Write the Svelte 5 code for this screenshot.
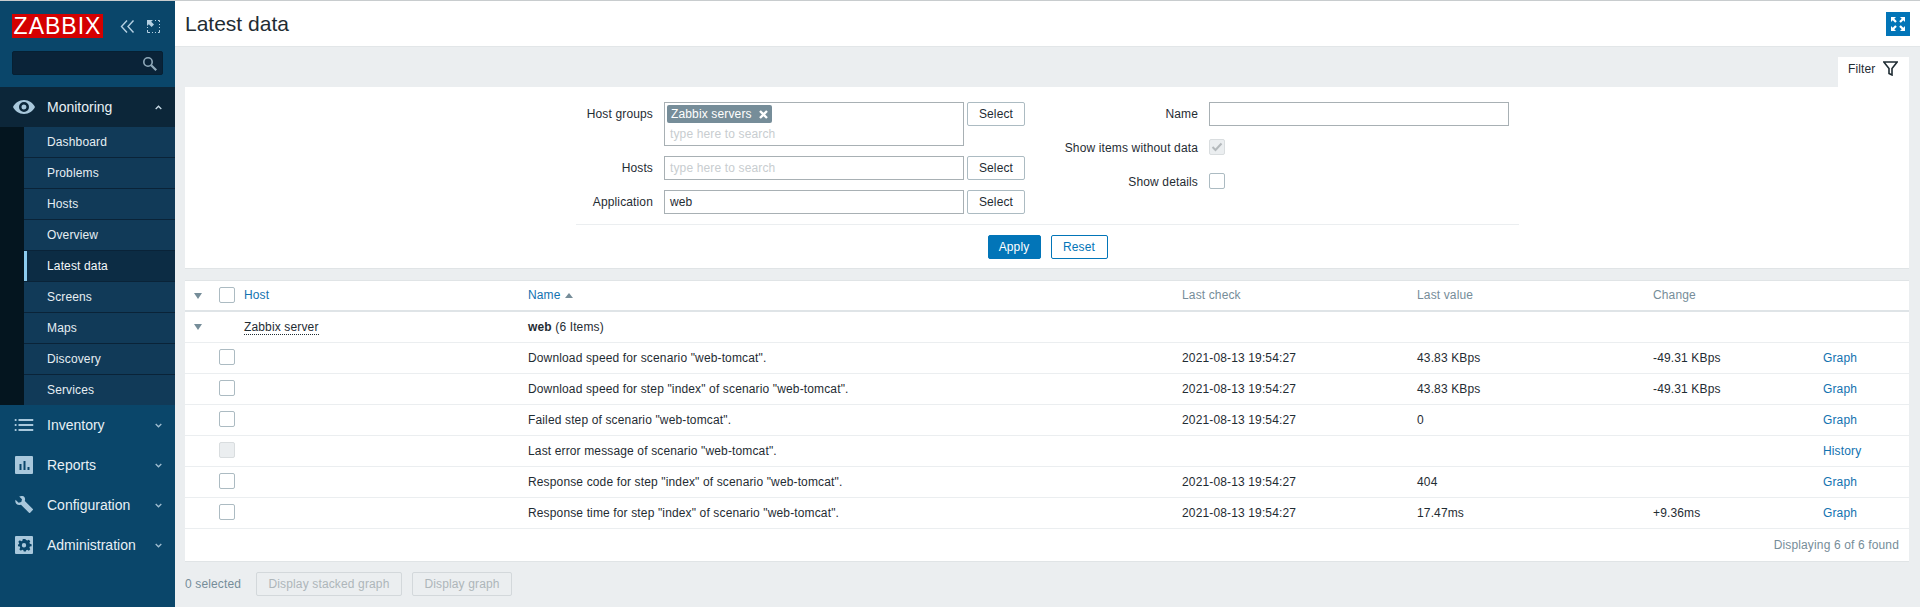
<script>
  const submenu = ['Dashboard', 'Problems', 'Hosts', 'Overview', 'Latest data', 'Screens', 'Maps', 'Discovery', 'Services'];
  const rows = [
    { name: 'Download speed for scenario "web-tomcat".', check: '2021-08-13 19:54:27', value: '43.83 KBps', change: '-49.31 KBps', action: 'Graph' },
    { name: 'Download speed for step "index" of scenario "web-tomcat".', check: '2021-08-13 19:54:27', value: '43.83 KBps', change: '-49.31 KBps', action: 'Graph' },
    { name: 'Failed step of scenario "web-tomcat".', check: '2021-08-13 19:54:27', value: '0', change: '', action: 'Graph' },
    { name: 'Last error message of scenario "web-tomcat".', check: '', value: '', change: '', action: 'History', disabled: true },
    { name: 'Response code for step "index" of scenario "web-tomcat".', check: '2021-08-13 19:54:27', value: '404', change: '', action: 'Graph' },
    { name: 'Response time for step "index" of scenario "web-tomcat".', check: '2021-08-13 19:54:27', value: '17.47ms', change: '+9.36ms', action: 'Graph' }
  ];
</script>

<div class="page">
  <aside class="sidebar">
    <div class="brand">
      <div class="logo">ZABBIX</div>
      <svg class="collapse" width="15" height="13" viewBox="0 0 15 13" fill="none" stroke="#b5d0e2" stroke-width="1.4"><path d="M7 .5 1.5 6.500l5.500 6M13.500 .5 8 6.500l5.500 6" /></svg>
      <svg class="kiosk" width="13" height="13" viewBox="0 0 13 13" fill="none"><path d="M8 .5h1M11 .5h1.5V2M12.5 4v1M12.5 7v1M12.500 10v2.500H11M9 12.500H8M6 12.500H5M3 12.500H.5V10M.5 8V7" stroke="#b5d0e2" /><path d="M0 0h6L4.200 1.800 7 4.600 4.600 7 1.800 4.200 0 6z" fill="#b5d0e2" /></svg>
    </div>
    <div class="search">
      <svg width="15" height="15" viewBox="0 0 15 15" fill="none" stroke="#8fa9ba" stroke-width="1.600"><circle cx="6" cy="6" r="4.200" /><path d="m9.200 9.200 5 5" stroke-width="2.200" /></svg>
    </div>

    <nav>
      <div class="section open">
        <div class="nav-head">
          <svg class="nav-icon" width="22" height="14" viewBox="0 0 22 14"><path d="M11 0C6 0 2 3 0 7c2 4 6 7 11 7s9-3 11-7c-2-4-6-7-11-7zm0 12a5 5 0 1 1 0-10 5 5 0 0 1 0 10zm0-7.500a2.500 2.500 0 1 0 0 5 2.500 2.500 0 0 0 0-5z" fill="#a9c8dc" /></svg>
          <span>Monitoring</span>
          <svg class="chev" width="7" height="5" viewBox="0 0 7 5" fill="none" stroke="#c9dbe6" stroke-width="1.300"><path d="M.7 4 3.500 1.200 6.300 4" /></svg>
        </div>
        <ul class="submenu">
          {#each submenu as item}
            <li class:active={item === 'Latest data'}>{item}</li>
          {/each}
        </ul>
      </div>

      <div class="nav-head">
        <svg class="nav-icon" width="19" height="12" viewBox="0 0 19 12" fill="#a9c8dc"><path d="M0 0h2v2H0zM4 0h15v2H4zM0 5h2v2H0zM4 5h15v2H4zM0 10h2v2H0zM4 10h15v2H4z" /></svg>
        <span>Inventory</span>
        <svg class="chev" width="7" height="5" viewBox="0 0 7 5" fill="none" stroke="#9fbdd0" stroke-width="1.300"><path d="M.7 1 3.500 3.800 6.300 1" /></svg>
      </div>
      <div class="nav-head">
        <svg class="nav-icon" width="18" height="18" viewBox="0 0 18 18"><path d="M1 0h16a1 1 0 0 1 1 1v16a1 1 0 0 1-1 1H1a1 1 0 0 1-1-1V1a1 1 0 0 1 1-1zm3.500 8v6h2V8zm4-3v9h2V5zm4 6v3h2v-3z" fill="#a9c8dc" fill-rule="evenodd" /></svg>
        <span>Reports</span>
        <svg class="chev" width="7" height="5" viewBox="0 0 7 5" fill="none" stroke="#9fbdd0" stroke-width="1.300"><path d="M.7 1 3.500 3.800 6.300 1" /></svg>
      </div>
      <div class="nav-head">
        <svg class="nav-icon" width="18" height="18" viewBox="0 0 18 18"><path d="M6.500 0C8.800-.3 10.500 1.700 10 4l-.2.900 8 8c.3.300.3.800 0 1.100l-2.600 2.800c-.4.300-.9.300-1.200 0l-8-8.100-1 .3C2.600 9.500.2 7.500.3 5L.5 3.700 3.600 6.700 6.300 6 7 3.300 4.200.4z" fill="#a9c8dc" /></svg>
        <span>Configuration</span>
        <svg class="chev" width="7" height="5" viewBox="0 0 7 5" fill="none" stroke="#9fbdd0" stroke-width="1.300"><path d="M.7 1 3.500 3.800 6.300 1" /></svg>
      </div>
      <div class="nav-head">
        <svg class="nav-icon" width="18" height="18" viewBox="0 0 18 18"><path d="M1 0h16a1 1 0 0 1 1 1v16a1 1 0 0 1-1 1H1a1 1 0 0 1-1-1V1a1 1 0 0 1 1-1zm6.800 3-.4 1.700-1.100.5-1.500-.9-1.500 1.500.9 1.500-.5 1.100L3 8.200v2l1.700.4.500 1.100-.9 1.500 1.500 1.500 1.500-.9 1.100.5.400 1.100h2l.4-1.100 1.100-.5 1.500.9 1.500-1.500-.9-1.500.5-1.100 1.700-.4v-2l-1.700-.4-.5-1.100.9-1.500-1.500-1.500-1.500.9-1.100-.5L10.200 3zM9 7a2.200 2.200 0 1 1 0 4.400A2.200 2.200 0 0 1 9 7z" fill="#a9c8dc" fill-rule="evenodd" /></svg>
        <span>Administration</span>
        <svg class="chev" width="7" height="5" viewBox="0 0 7 5" fill="none" stroke="#9fbdd0" stroke-width="1.300"><path d="M.7 1 3.500 3.800 6.300 1" /></svg>
      </div>
    </nav>
  </aside>

  <main class="content">
    <header class="top">
      <h1>Latest data</h1>
      <button class="fullscreen" aria-label="Fullscreen">
        <svg width="16" height="16" viewBox="0 0 16 16" fill="#fff"><path d="M1 1h5L4.300 2.700 6.800 5.200 5.200 6.800 2.700 4.300 1 6zM15 1v5l-1.700-1.700-2.500 2.500-1.600-1.600 2.500-2.500L10 1zM1 15v-5l1.700 1.700 2.500-2.500 1.600 1.600-2.500 2.500L6 15zM15 15h-5l1.700-1.700-2.500-2.500 1.600-1.600 2.500 2.500L15 10z" /></svg>
      </button>
    </header>

    <div class="body">
      <div class="tabs">
        <div class="tab">
          <span>Filter</span>
          <svg width="15" height="15" viewBox="0 0 15 15" fill="none" stroke="#1f2c33" stroke-width="1.600"><path d="M.8 1h13.400L9 7.500V14l-3-1.500v-5z" /></svg>
        </div>
      </div>

      <section class="filter">
        <div class="filter-cols">
          <div class="form left">
            <label class="lbl">Host groups</label>
            <div class="multi">
              <span class="chip">Zabbix servers
                <svg width="9" height="9" viewBox="0 0 9 9" stroke="#fff" stroke-width="2.400"><path d="M1 1l7 7M8 1 1 8" /></svg>
              </span>
              <span class="ph">type here to search</span>
            </div>
            <button class="select">Select</button>

            <label class="lbl">Hosts</label>
            <div class="input"><span class="ph">type here to search</span></div>
            <button class="select">Select</button>

            <label class="lbl">Application</label>
            <div class="input">web</div>
            <button class="select">Select</button>
          </div>

          <div class="form right">
            <label class="lbl">Name</label>
            <div class="input"></div>

            <label class="lbl">Show items without data</label>
            <div class="check-cell">
              <span class="check disabled">
                <svg width="12" height="10" viewBox="0 0 12 10" fill="none" stroke="#b4b9bc" stroke-width="2"><path d="M1.500 5 4.500 8l6-6.500" /></svg>
              </span>
            </div>

            <label class="lbl">Show details</label>
            <div class="check-cell"><span class="check"></span></div>
          </div>
        </div>
        <div class="actions">
          <button class="apply">Apply</button>
          <button class="reset">Reset</button>
        </div>
      </section>

      <section class="list">
        <table>
          <colgroup>
            <col style="width:30px" /><col style="width:24px" /><col style="width:284px" /><col style="width:654px" /><col style="width:235px" /><col style="width:236px" /><col style="width:170px" /><col />
          </colgroup>
          <thead>
            <tr>
              <th class="arrow-cell"><span class="arrow"></span></th>
              <th class="box-cell"><span class="check"></span></th>
              <th><span class="link">Host</span></th>
              <th><span class="link">Name</span><span class="sort"></span></th>
              <th>Last check</th>
              <th>Last value</th>
              <th>Change</th>
              <th></th>
            </tr>
          </thead>
          <tbody>
            <tr>
              <td class="arrow-cell"><span class="arrow"></span></td>
              <td></td>
              <td><span class="host">Zabbix server</span></td>
              <td colspan="5"><b>web</b> <span class="count">(6 Items)</span></td>
            </tr>
            {#each rows as row}
              <tr>
                <td></td>
                <td class="box-cell"><span class="check" class:disabled={row.disabled}></span></td>
                <td></td>
                <td>{row.name}</td>
                <td>{row.check}</td>
                <td>{row.value}</td>
                <td>{row.change}</td>
                <td><span class="link">{row.action}</span></td>
              </tr>
            {/each}
          </tbody>
        </table>
        <div class="paging">Displaying 6 of 6 found</div>
      </section>

      <div class="bulk">
        <span class="selected">0 selected</span>
        <button class="stacked" disabled>Display stacked graph</button>
        <button class="single" disabled>Display graph</button>
      </div>
    </div>
  </main>
</div>

<style>
  :global(body) {
    margin: 0;
    background: #ebeef0;
  }
  .page {
    display: flex;
    height: 607px;
    overflow: hidden;
    font-family: "Liberation Sans", Arial, sans-serif;
    font-size: 12px;
    letter-spacing: .14px;
    color: #1f2c33;
  }
  .sidebar {
    width: 175px;
    flex: none;
    background: #0a466a;
    border-top: 1px solid #c8ccce;
    box-sizing: border-box;
    color: #f2f6f8;
  }
  .brand {
    display: flex;
    align-items: center;
    height: 38px;
    padding: 12px 0 0 12px;
    box-sizing: border-box;
  }
  .logo {
    width: 91px;
    height: 24px;
    background: #d40000;
    color: #fff;
    font-size: 23px;
    line-height: 24px;
    text-align: center;
    letter-spacing: 1px;
  }
  .collapse { margin-left: 17px; }
  .kiosk { margin-left: 12px; }
  .search {
    display: flex;
    align-items: center;
    justify-content: flex-end;
    width: 151px;
    height: 24px;
    margin: 12px 0 12px 12px;
    padding-right: 5px;
    box-sizing: border-box;
    background: #0a2338;
    border: 1px solid #062033;
    border-radius: 2px;
  }
  .nav-head {
    position: relative;
    display: flex;
    align-items: center;
    height: 40px;
    padding-left: 47px;
    font-size: 14px;
    letter-spacing: 0;
    color: #e8f0f5;
  }
  .nav-icon {
    position: absolute;
    left: 24px;
    top: 50%;
    transform: translate(-50%, -50%);
  }
  .chev {
    position: absolute;
    right: 13px;
    top: 18px;
  }
  .open .nav-head { background: #0c2639; }
  .submenu {
    list-style: none;
    margin: 0;
    padding: 0 0 0 24px;
    background: #04151f;
  }
  .submenu li {
    height: 31px;
    box-sizing: border-box;
    padding-left: 23px;
    line-height: 30px;
    background: #113a58;
    border-bottom: 1px solid #0a2338;
    color: #e6eef3;
  }
  .submenu li:last-child {
    height: 30px;
    border-bottom: 0;
  }
  .submenu li.active {
    background: #0c2c44;
    box-shadow: inset 3px 0 0 #8ccbee;
    color: #f4f8fa;
  }
  .content {
    flex: 1;
    min-width: 0;
  }
  .top {
    display: flex;
    align-items: center;
    justify-content: space-between;
    height: 47px;
    box-sizing: border-box;
    padding: 1px 10px 0 10px;
    background: #fff;
    border-top: 1px solid #c8ccce;
    border-bottom: 1px solid #e2e6e8;
  }
  h1 {
    margin: 0;
    font-size: 21px;
    font-weight: 400;
    letter-spacing: 0;
    color: #1f2c33;
  }
  .fullscreen {
    display: flex;
    align-items: center;
    justify-content: center;
    width: 24px;
    height: 24px;
    padding: 0;
    border: 0;
    background: #0275b8;
  }
  .body {
    padding: 10px 11px 0 10px;
  }
  .tabs {
    display: flex;
    justify-content: flex-end;
    height: 30px;
  }
  .tab {
    display: flex;
    align-items: center;
    gap: 7px;
    width: 71px;
    box-sizing: border-box;
    padding: 0 0 7px 10px;
    background: #fff;
  }
  .filter {
    height: 182px;
    box-sizing: border-box;
    padding: 15px 15px 0 391px;
    background: #fff;
    border-bottom: 1px solid #e0e4e6;
  }
  .filter-cols {
    display: flex;
    height: 122px;
    margin-right: 375px;
    border-bottom: 1px solid #ebeef0;
  }
  .form {
    display: grid;
    row-gap: 10px;
    align-items: start;
  }
  .left {
    grid-template-columns: 88px 300px 61px;
    grid-template-rows: 44px 24px 24px;
    width: 449px;
  }
  .right {
    grid-template-columns: 184px 300px;
    grid-template-rows: 24px 24px 24px;
  }
  .lbl {
    padding-right: 11px;
    text-align: right;
    line-height: 24px;
    color: #1f2c33;
    white-space: nowrap;
  }
  .multi, .input {
    box-sizing: border-box;
    background: #fff;
    border: 1px solid #a8b0b4;
    padding: 0 5px;
    line-height: 22px;
  }
  .input { height: 24px; }
  .multi {
    height: 44px;
    padding: 2px 2px 0;
    display: flex;
    flex-direction: column;
    align-items: flex-start;
    line-height: 18px;
  }
  .chip {
    display: inline-flex;
    align-items: center;
    gap: 7px;
    height: 18px;
    padding: 0 4px;
    background: #768d99;
    color: #fff;
    border-radius: 2px;
  }
  .multi .ph { margin: 2px 0 0 3px; line-height: 18px; }
  .ph { color: #c8cdd0; }
  .select {
    justify-self: end;
    width: 58px;
    height: 24px;
    padding: 0;
    background: #fff;
    border: 1px solid #acbbc2;
    border-radius: 2px;
    font: inherit;
    letter-spacing: inherit;
    color: #1f2c33;
  }
  .check-cell { display: flex; align-items: flex-start; height: 24px; padding-top: 3px; box-sizing: border-box; }
  .check {
    display: inline-flex;
    align-items: center;
    justify-content: center;
    width: 16px;
    height: 16px;
    box-sizing: border-box;
    background: #fff;
    border: 1px solid #acbbc2;
    border-radius: 2px;
    vertical-align: middle;
  }
  .check.disabled {
    background: #ebeef0;
    border-color: #d9dddf;
  }
  .actions {
    display: flex;
    justify-content: center;
    gap: 10px;
    margin: 10px 375px 0 0;
  }
  .actions button {
    height: 24px;
    padding: 0;
    border-radius: 2px;
    font: inherit;
    letter-spacing: inherit;
  }
  .apply {
    width: 53px;
    background: #0275b8;
    border: 1px solid #0275b8;
    color: #fff;
  }
  .reset {
    width: 57px;
    background: #fff;
    border: 1px solid #0275b8;
    color: #0275b8;
  }
  .list {
    margin-top: 11px;
    background: #fff;
    border-top: 1px solid #e0e4e6;
    border-bottom: 1px solid #e0e4e6;
  }
  table {
    width: 100%;
    table-layout: fixed;
    border-collapse: collapse;
  }
  th {
    height: 27px;
    padding: 0 5px 2px;
    text-align: left;
    font-weight: 400;
    color: #768d99;
    border-bottom: 2px solid #dfe4e7;
  }
  td {
    height: 30px;
    padding: 0 5px;
    border-bottom: 1px solid #ebeef0;
    white-space: nowrap;
  }
  .arrow-cell { padding: 0 0 0 9px; }
  .box-cell { padding: 0 0 0 4px; }
  .box-cell .check { margin-bottom: 2px; }
  .arrow {
    display: inline-block;
    border: 4px solid transparent;
    border-top: 6px solid #768d99;
    border-bottom: 0;
    vertical-align: 1px;
  }
  .sort {
    display: inline-block;
    margin-left: 4px;
    border: 4px solid transparent;
    border-bottom: 5px solid #768d99;
    border-top: 0;
    vertical-align: 1px;
  }
  .link { color: #1272b0; }
  .host { border-bottom: 1px dotted #1f2c33; }
  .count { color: #1f2c33; }
  .paging {
    height: 32px;
    line-height: 32px;
    padding-right: 10px;
    text-align: right;
    color: #768d99;
  }
  .bulk {
    display: flex;
    align-items: center;
    gap: 10px;
    margin-top: 10px;
  }
  .selected { width: 61px; color: #768d99; }
  .bulk button {
    height: 24px;
    padding: 0;
    background: #ebeef0;
    border: 1px solid #d3d8db;
    border-radius: 2px;
    font: inherit;
    letter-spacing: inherit;
    color: #aeb6ba;
  }
  .bulk .stacked { width: 146px; }
  .bulk .single { width: 100px; }
</style>
